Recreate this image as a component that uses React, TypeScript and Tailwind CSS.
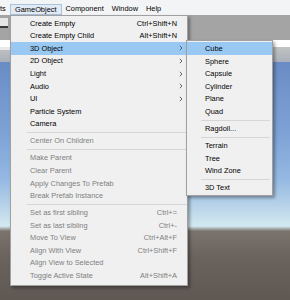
type Item =
  | { sep: true }
  | { sep?: false; label: string; shortcut?: string; arrow?: boolean; disabled?: boolean; active?: boolean };

const mainItems: Item[] = [
  { label: "Create Empty", shortcut: "Ctrl+Shift+N" },
  { label: "Create Empty Child", shortcut: "Alt+Shift+N" },
  { label: "3D Object", arrow: true, active: true },
  { label: "2D Object", arrow: true },
  { label: "Light", arrow: true },
  { label: "Audio", arrow: true },
  { label: "UI", arrow: true },
  { label: "Particle System" },
  { label: "Camera" },
  { sep: true },
  { label: "Center On Children", disabled: true },
  { sep: true },
  { label: "Make Parent", disabled: true },
  { label: "Clear Parent", disabled: true },
  { label: "Apply Changes To Prefab", disabled: true },
  { label: "Break Prefab Instance", disabled: true },
  { sep: true },
  { label: "Set as first sibling", shortcut: "Ctrl+=", disabled: true },
  { label: "Set as last sibling", shortcut: "Ctrl+-", disabled: true },
  { label: "Move To View", shortcut: "Ctrl+Alt+F", disabled: true },
  { label: "Align With View", shortcut: "Ctrl+Shift+F", disabled: true },
  { label: "Align View to Selected", disabled: true },
  { label: "Toggle Active State", shortcut: "Alt+Shift+A", disabled: true },
];

const subItems: Item[] = [
  { label: "Cube", active: true },
  { label: "Sphere" },
  { label: "Capsule" },
  { label: "Cylinder" },
  { label: "Plane" },
  { label: "Quad" },
  { sep: true },
  { label: "Ragdoll..." },
  { sep: true },
  { label: "Terrain" },
  { label: "Tree" },
  { label: "Wind Zone" },
  { sep: true },
  { label: "3D Text" },
];

function Chevron() {
  return (
    <svg width="4" height="6" viewBox="0 0 4 6" className="text-[#555]">
      <path d="M0.8 0.8 L3 3 L0.8 5.2" fill="none" stroke="currentColor" strokeWidth="0.9" />
    </svg>
  );
}

function MenuRows({ items, textPad, sepPad, withShortcuts }: { items: Item[]; textPad: string; sepPad: string; withShortcuts?: boolean }) {
  return (
    <>
      {items.map((it, i) =>
        it.sep ? (
          <div key={i} className={`h-[4.4px] flex items-center ${sepPad}`}>
            <div className="h-px flex-1 bg-[#d6d6d6]" />
          </div>
        ) : (
          <div
            key={i}
            className={`h-[12.6px] flex items-center ${textPad} ${it.active ? "bg-[#99c9f2]" : ""} ${
              it.disabled ? "text-[#7f7f7f]" : "text-[#000]"
            }`}
          >
            <span className="flex-1 whitespace-nowrap">{it.label}</span>
            {withShortcuts && (
              <>
                <span className="whitespace-nowrap">{it.shortcut}</span>
                <span className="w-[10px] flex pl-[2px]">{it.arrow && <Chevron />}</span>
              </>
            )}
          </div>
        )
      )}
    </>
  );
}

export default function App() {
  return (
    <div className="relative w-[290px] h-[300px] overflow-hidden font-['Liberation_Sans',Arial,sans-serif] text-[7.4px] leading-none">
      {/* Menu bar */}
      <div className="h-[15px] bg-[#f3f4f5] flex items-end text-[#000]">
        <span className="w-[10px] h-[12px] flex items-center">ts</span>
        <span className="h-[11.5px] px-[4px] flex items-center bg-[#e2eaf4] border border-[#a9c2de]">GameObject</span>
        <span className="h-[12px] px-[4px] flex items-center">Component</span>
        <span className="h-[12px] px-[4px] flex items-center">Window</span>
        <span className="h-[12px] px-[4px] flex items-center">Help</span>
      </div>

      {/* Toolbar */}
      <div className="h-[25px] bg-[#a4a4a4] flex items-start pt-[3px]">
        <div className="w-[8px] h-[10px] bg-[#e6e6e6] border-b-2 border-[#3b3b3b]" />
      </div>

      {/* Tab strip */}
      <div className="h-[15px] bg-gradient-to-b from-[#c2c2c2] to-[#a9b0bb]">
        <div className="mt-[7px] w-[10px] h-[3px] bg-[#e9e9e9]" />
      </div>

      {/* Scene view */}
      <div className="h-[245px] bg-[linear-gradient(to_bottom,#6a8cc5_0%,#7fa3d6_30%,#95b9e2_48%,#bcd6ea_60%,#d3eaf1_67%,#7c736d_69%,#6a625d_80%,#5d5651_100%)]" />

      {/* GameObject dropdown */}
      <div className="absolute left-[10px] top-[15px] w-[178px] bg-[#f0f0f0] border border-[#a0a0a0] pt-[1px] pb-[3px] shadow-[2px_2px_3px_rgba(0,0,0,0.35)]">
        <MenuRows items={mainItems} textPad="pl-[19px]" sepPad="pl-[16px]" withShortcuts />
      </div>

      {/* 3D Object submenu */}
      <div className="absolute left-[186px] top-[40.4px] w-[87px] bg-[#f0f0f0] border border-[#a0a0a0] pt-[1px] pb-[1px] shadow-[2px_2px_3px_rgba(0,0,0,0.35)]">
        <MenuRows items={subItems} textPad="pl-[18px]" sepPad="pl-[14px] pr-[2px]" />
      </div>
    </div>
  );
}
